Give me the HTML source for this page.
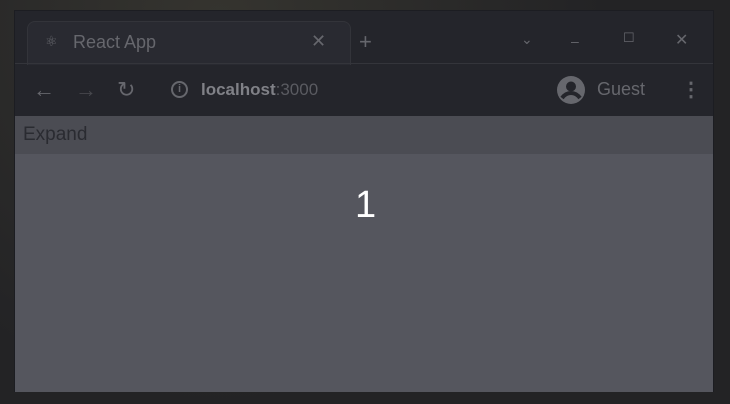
<!DOCTYPE html>
<html><head><style>
*{margin:0;padding:0;box-sizing:border-box}
body{width:730px;height:404px;overflow:hidden;background:#242426;font-family:"Liberation Sans",sans-serif;position:relative}
.bg{position:absolute;inset:0;background:radial-gradient(circle at 30% 5%,#35342f,#232325 60%),#242426}
.win{position:absolute;left:14px;top:10px;width:700px;height:382px;background:#24252b;border:1px solid #1c1d22}
.tab{position:absolute;left:12px;top:10px;width:324px;height:44px;background:#292a31;border-radius:8px 8px 0 0;border:1px solid #33343a;border-bottom:none}
.t{position:absolute;color:#66676d;font-size:17px}
.page{position:absolute;left:0;top:105px;width:698px;height:276px;background:#55565e}
.bar{position:absolute;left:0;top:0;width:100%;height:38px;background:#4b4c53;color:#2a2b31;font-size:19px;padding:8px 8px}
.one{position:absolute;left:340px;top:68px;color:#fff;font-size:38px}
</style></head><body>
<div class="bg"></div>
<div class="win">
 <div class="tab"></div>
 <div class="t" style="left:30px;top:22px;font-size:14px">⚛</div>
 <div class="t" style="left:58px;top:21px;font-size:18px">React App</div>
 <div class="t" style="left:296px;top:20px;font-size:18px">✕</div>
 <div class="t" style="left:344px;top:18px;font-size:22px">+</div>
 <div class="t" style="left:506px;top:20px;font-size:14px">⌄</div>
 <div class="t" style="left:556px;top:22px;font-size:14px">–</div>
 <div class="t" style="left:608px;top:19px;font-size:13px">☐</div>
 <div class="t" style="left:660px;top:19px;font-size:16px">✕</div>
 <div style="position:absolute;left:0;top:52px;width:698px;height:1px;background:#34353b"></div>
 <div class="t" style="left:18px;top:66px;font-size:22px">←</div>
 <div class="t" style="left:60px;top:66px;font-size:22px;color:#46474c">→</div>
 <div class="t" style="left:102px;top:66px;font-size:22px">↻</div>
 <div style="position:absolute;left:156px;top:70px;width:17px;height:17px;border:2px solid #66676d;border-radius:50%;color:#66676d;font-size:11px;text-align:center;line-height:13px;font-weight:bold">i</div>
 <div class="t" style="left:186px;top:69px;color:#808187;font-weight:bold">localhost<span style="color:#5a5b61;font-weight:normal">:3000</span></div>
 <svg style="position:absolute;left:542px;top:65px" width="28" height="28" viewBox="0 0 28 28"><circle cx="14" cy="14" r="14" fill="#66676d"/><circle cx="14" cy="10.5" r="5" fill="#24252b"/><path d="M5 22c3-4 6-5 9-5s6 1 9 5" stroke="#24252b" stroke-width="4" fill="none"/></svg>
 <div class="t" style="left:582px;top:68px;font-size:18px">Guest</div>
 <div class="t" style="left:666px;top:66px;font-size:20px;font-weight:bold">⋮</div>
 <div class="page">
  <div class="bar">Expand</div>
  <div class="one">1</div>
 </div>
</div>
</body></html>
